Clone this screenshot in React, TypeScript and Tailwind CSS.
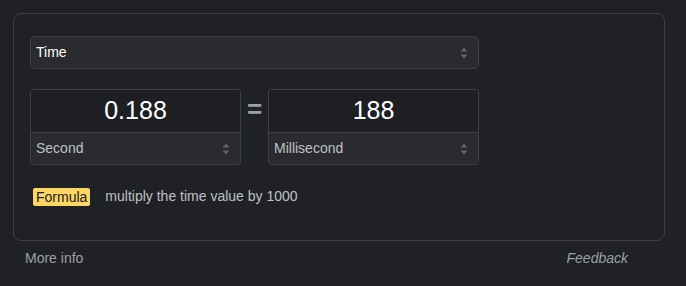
const FONT = { fontFamily: '"Liberation Sans", Arial, sans-serif' };

function Arrows() {
  return (
    <svg width="8" height="12" viewBox="0 0 8 12" aria-hidden className="shrink-0">
      <path d="M4 0.5 L7.5 4.5 H0.5 Z" fill="#5f6368" />
      <path d="M4 11.5 L7.5 7.5 H0.5 Z" fill="#5f6368" />
    </svg>
  );
}

function UnitBox({ value, unit }: { value: string; unit: string }) {
  return (
    <div className="flex w-[211px] flex-col overflow-hidden rounded-[3px] border border-[#3c4043]">
      <div className="flex h-[42px] items-center justify-center bg-[#1e1f22] text-[25px] text-white">
        {value}
      </div>
      <div className="flex h-[32px] items-center justify-between border-t border-[#3c4043] bg-[#2a2b2e] pl-[5px] pr-[10px] text-[14px] text-[#bdc1c6]">
        <span>{unit}</span>
        <Arrows />
      </div>
    </div>
  );
}

export default function App() {
  return (
    <div className="h-[286px] w-[686px] bg-[#202124] pl-[13px] pt-[13px]" style={FONT}>
      <div className="flex h-[228px] w-[652px] flex-col rounded-[8px] border border-[#3c4043] pl-[16px] pt-[22px]">
        <div className="flex h-[33px] w-[449px] items-center justify-between rounded-[5px] border border-[#3c4043] bg-[#2a2b2e] pl-[5px] pr-[10px] text-[14px] text-white">
          <span>Time</span>
          <Arrows />
        </div>

        <div className="mt-[20px] flex w-[449px] items-start justify-between">
          <UnitBox value="0.188" unit="Second" />
          <div className="flex h-[42px] items-center pb-[2px] text-[26px] font-bold leading-none text-[#9aa0a6]">=</div>
          <UnitBox value="188" unit="Millisecond" />
        </div>

        <div className="mt-[21px] flex items-center pl-[3px] text-[14px]">
          <span className="rounded-[2px] bg-[#fdd663] px-[3px] leading-[18px] text-[#202124]">Formula</span>
          <span className="ml-[15px] text-[#bdc1c6]">multiply the time value by 1000</span>
        </div>
      </div>

      <div className="flex w-[615px] justify-between pl-[12px] pt-[7px] text-[14px] text-[#9aa0a6]">
        <span>More info</span>
        <span className="italic">Feedback</span>
      </div>
    </div>
  );
}
